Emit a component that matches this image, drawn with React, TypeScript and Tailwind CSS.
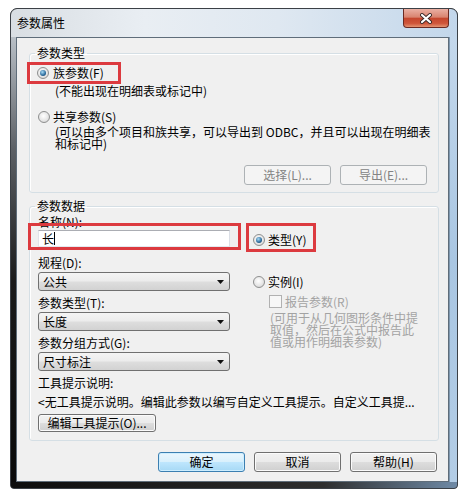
import type { ReactNode } from 'react';

function Radio({ checked = false }: { checked?: boolean }) {
  return (
    <span className="flex h-[12px] w-[12px] shrink-0 items-center justify-center rounded-full border border-[#8e8f8f] bg-[radial-gradient(circle_at_45%_40%,#ffffff,#e4e4e4_60%,#c9c9c9)]">
      {checked && (
        <span className="h-[6px] w-[6px] rounded-full bg-[radial-gradient(circle_at_40%_35%,#a9dcf7,#2a6a9c_60%,#0f3454)]" />
      )}
    </span>
  );
}

function Combo({ value }: { value: string }) {
  return (
    <div className="flex h-[19px] w-[192px] items-center justify-between rounded-[3px] border border-[#707070] bg-[linear-gradient(#f4f4f4_0%,#ececec_48%,#dedede_52%,#d2d2d2_100%)] pl-[4px] pr-[5px]">
      <span>{value}</span>
      <svg width="7" height="4" viewBox="0 0 7 4">
        <path d="M0 0h7L3.5 4z" fill="#111" />
      </svg>
    </div>
  );
}

type BtnKind = 'normal' | 'default' | 'disabled';

function Btn({ children, kind = 'normal', className = '' }: { children: ReactNode; kind?: BtnKind; className?: string }) {
  const look =
    kind === 'default'
      ? 'border-[#3c7fb1] bg-[linear-gradient(#eaf6fd_0%,#d9f0fc_48%,#bee6fd_52%,#a7d9f5_100%)] shadow-[inset_0_0_0_1px_#cdeeff]'
      : kind === 'disabled'
        ? 'border-[#adb2b5] bg-[#f4f4f4] text-[#838383]'
        : 'border-[#707070] bg-[linear-gradient(#f2f2f2_0%,#ebebeb_48%,#dddddd_52%,#cfcfcf_100%)] shadow-[inset_0_0_0_1px_#fbfbfb]';
  return (
    <div className={`flex items-center justify-center rounded-[3px] border ${look} ${className}`}>
      {children}
    </div>
  );
}

export default function App() {
  return (
    <div className="h-[495px] w-[468px] overflow-hidden bg-white pl-[10px] pt-[8px] font-['Noto_Sans_CJK_SC',sans-serif] text-[12px] leading-[14px] text-black">
      <div className="flex h-[481px] w-[448px] flex-col overflow-hidden rounded-t-[7px] rounded-b-[4px] border border-[#3b4046] bg-[#1c1c1c]">
        {/* title bar */}
        <div className="flex h-[28px] shrink-0 items-center bg-[linear-gradient(to_right,#d9dee3_0%,#e9eef3_30%,#dfe8f1_60%,#c3d7eb_100%)] pl-[6px]">
          <span>参数属性</span>
          <div className="mr-[8px] ml-auto flex h-[19px] w-[46px] items-center justify-center self-start rounded-b-[4px] border border-t-0 border-[#6b2a22] bg-[linear-gradient(#eab0a3_0%,#d98470_45%,#c5472e_52%,#cf563b_80%,#e49472_100%)]">
            <svg width="14" height="11" viewBox="0 0 14 11">
              <path d="M3 2l8 7M11 2l-8 7" stroke="#3b2a28" strokeWidth="4" strokeLinecap="round" />
              <path d="M3 2l8 7M11 2l-8 7" stroke="#ffffff" strokeWidth="2.2" strokeLinecap="round" />
            </svg>
          </div>
        </div>

        <div className="flex">
          <div className="w-[5px] bg-[linear-gradient(#b9c0c7,#5d6166_25%,#1a1a1a_55%,#0a0a0a)]" />

          {/* client area */}
          <div className="h-[445px] w-[433px] border border-[#5f6d7a] bg-[#f0f0f0]">
            <fieldset className="mt-[8px] ml-[12px] w-[410px] rounded-[3px] border border-[#d5dfe5] pb-[7px] shadow-[inset_1px_1px_0_#ffffff]">
              <legend className="ml-[5px] px-[2px] leading-[14px]">参数类型</legend>

              <div className="relative mt-[2px] ml-[-3px] flex h-[22px] w-[94px] items-center gap-[4px] border-[3px] border-[#dc3a3f] pl-[7px]">
                <Radio checked />
                <span>族参数(F)</span>
              </div>
              <div className="ml-[25px]">(不能出现在明细表或标记中)</div>

              <div className="mt-[12px] ml-[8px] flex h-[14px] items-center gap-[3px]">
                <Radio />
                <span>共享参数(S)</span>
              </div>
              <div className="mt-[2px] ml-[25px] leading-[12px]">
                (可以由多个项目和族共享，可以导出到 ODBC，并且可以出现在明细表
                <br />
                和标记中)
              </div>

              <div className="mt-[15px] flex justify-end gap-[9px] pr-[11px]">
                <Btn kind="disabled" className="h-[20px] w-[87px]">选择(L)...</Btn>
                <Btn kind="disabled" className="h-[20px] w-[87px]">导出(E)...</Btn>
              </div>
            </fieldset>

            <fieldset className="mt-[6px] ml-[12px] w-[410px] rounded-[3px] border border-[#d5dfe5] pb-[8px] shadow-[inset_1px_1px_0_#ffffff]">
              <legend className="ml-[5px] px-[2px] leading-[14px]">参数数据</legend>

              <div className="mt-[2px] ml-[8px]">名称(N):</div>

              <div className="relative mt-[-6px] flex items-start">
                <div className="ml-[-2px] h-[27px] w-[213px] border-[3px] border-[#dc3a3f] pt-[4px] pl-[7px]">
                  <div className="flex h-[17px] w-[192px] items-center border border-[#abadb3] border-r-[#dbdfe6] border-b-[#e3e9ef] border-l-[#e2e3ea] bg-white pl-[3px]">
                    <span>长</span>
                    <span className="h-[13px] w-px bg-black" />
                  </div>
                </div>
                <div className="ml-[5px] flex h-[29px] w-[70px] items-center gap-[3px] border-[3px] border-[#dc3a3f] pt-[5px] pl-[4px]">
                  <Radio checked />
                  <span>类型(Y)</span>
                </div>
              </div>

              <div className="flex">
                <div className="mt-[4px] ml-[8px] w-[192px]">
                  <div>规程(D):</div>
                  <div className="mt-[2px]">
                    <Combo value="公共" />
                  </div>
                  <div className="mt-[5px]">参数类型(T):</div>
                  <div className="mt-[2px]">
                    <Combo value="长度" />
                  </div>
                  <div className="mt-[5px]">参数分组方式(G):</div>
                  <div className="mt-[2px]">
                    <Combo value="尺寸标注" />
                  </div>
                </div>

                <div className="ml-[23px]">
                  <div className="mt-[23px] flex h-[14px] items-center gap-[3px]">
                    <Radio />
                    <span>实例(I)</span>
                  </div>
                  <div className="mt-[6px] ml-[16px] flex h-[13px] items-center gap-[3px]">
                    <span className="h-[13px] w-[13px] border border-[#b1b1b1] bg-[#f7f7f7]" />
                    <span className="text-[#a3a3a3]">报告参数(R)</span>
                  </div>
                  <div className="mt-[4px] ml-[17px] leading-[12px] text-[#a3a3a3]">
                    (可用于从几何图形条件中提
                    <br />
                    取值，然后在公式中报告此
                    <br />
                    值或用作明细表参数)
                  </div>
                </div>
              </div>

              <div className="mt-[5px] ml-[8px]">工具提示说明:</div>
              <div className="mt-[5px] ml-[8px] whitespace-nowrap">
                &lt;无工具提示说明。编辑此参数以编写自定义工具提示。自定义工具提...
              </div>
              <Btn className="mt-[5px] ml-[8px] h-[18px] w-[118px]">编辑工具提示(O)...</Btn>
            </fieldset>

            <div className="mt-[11px] flex justify-end gap-[9px] pr-[11px]">
              <Btn kind="default" className="h-[20px] w-[87px]">确定</Btn>
              <Btn className="h-[20px] w-[87px]">取消</Btn>
              <Btn className="h-[20px] w-[87px]">帮助(H)</Btn>
            </div>
          </div>

          <div className="w-[8px] bg-[linear-gradient(#c4d8ec,#a9c6e2_50%,#b3cde6)] shadow-[inset_1px_0_0_#7f98b0]" />
        </div>

        <div className="flex-1 bg-[linear-gradient(to_right,#0d0d0d,#2e2e2e_70%,#6f8aa6)]" />
      </div>
    </div>
  );
}
